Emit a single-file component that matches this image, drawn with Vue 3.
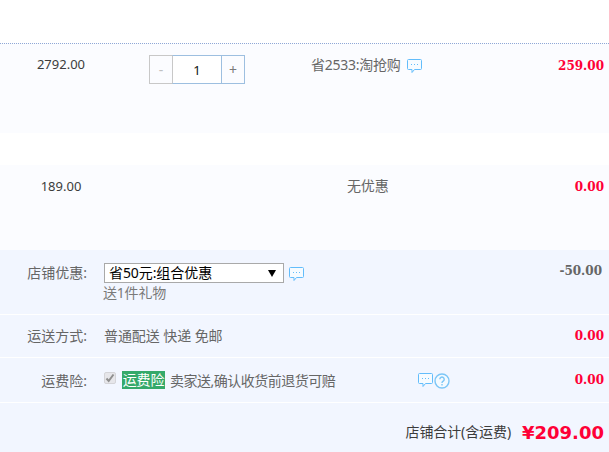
<script setup>
const lead = { price: '2792.00', qty: 1, promo: '省2533:淘抢购', total: '259.00' }
const bubble = 'M1.5.5h12a1 1 0 0 1 1 1v8a1 1 0 0 1-1 1H7.5l-2.5 3v-3H1.5a1 1 0 0 1-1-1v-8a1 1 0 0 1 1-1z'
</script>

<template>
  <div class="page">
    <div class="item first">
      <div class="price">{{ lead.price }}</div>
      <div class="qty">
        <span class="step minus">-</span>
        <span class="num">{{ lead.qty }}</span>
        <span class="step plus">+</span>
      </div>
      <div class="promo">
        <span>{{ lead.promo }}</span>
        <svg class="bubble" width="15" height="14" viewBox="0 0 15 14">
          <path :d="bubble" class="bubble-shape" />
          <path d="M4 5.5h1M7 5.5h1M10 5.5h1" class="bubble-dots" />
        </svg>
      </div>
      <div class="amount">{{ lead.total }}</div>
    </div>
    <div class="item second">
      <div class="price">189.00</div>
      <div class="qty"></div>
      <div class="promo none">无优惠</div>
      <div class="amount">0.00</div>
    </div>
    <div class="shop">
      <div class="row coupon">
        <div class="label">店铺优惠:</div>
        <div class="body">
          <div class="pick">
            <div class="select">
              <span>省50元:组合优惠</span>
              <span class="caret"></span>
            </div>
            <svg class="bubble" width="15" height="14" viewBox="0 0 15 14">
              <path :d="bubble" class="bubble-shape" />
              <path d="M4 5.5h1M7 5.5h1M10 5.5h1" class="bubble-dots" />
            </svg>
          </div>
          <div class="gift">送1件礼物</div>
        </div>
        <div class="amount off">-50.00</div>
      </div>
      <div class="row ship">
        <div class="label">运送方式:</div>
        <div class="body">普通配送 快递 免邮</div>
        <div class="amount ship-amount">0.00</div>
      </div>
      <div class="row insure">
        <div class="label">运费险:</div>
        <div class="body line">
          <span class="check">
            <svg width="10" height="10" viewBox="0 0 10 10"><path d="M1.5 5.5l2.2 2.5L8.5 1.5" fill="none" stroke="#8f8f8f" stroke-width="2" /></svg>
          </span>
          <span class="tag">运费险</span>
          <span class="note">卖家送,确认收货前退货可赔</span>
          <span class="icons">
            <svg width="15" height="14" viewBox="0 0 15 14">
              <path :d="bubble" class="bubble-shape" />
              <path d="M4 5.5h1M7 5.5h1M10 5.5h1" class="bubble-dots" />
            </svg>
            <svg class="help" width="16" height="16" viewBox="0 0 16 16">
              <circle cx="8" cy="8" r="7" fill="#f4faff" stroke="#7cc6f7" stroke-width="1.4" />
              <path d="M5.8 6.2a2.2 2.2 0 1 1 3.4 1.9c-.8.5-1.2.9-1.2 1.9" fill="none" stroke="#7cc6f7" stroke-width="1.4" />
              <path d="M8 11v1.6" stroke="#7cc6f7" stroke-width="1.4" />
            </svg>
          </span>
        </div>
        <div class="amount insure-amount">0.00</div>
      </div>
      <div class="sum">
        <span class="sum-label">店铺合计(含运费)</span>
        <span class="sum-value">¥209.00</span>
      </div>
    </div>
  </div>
</template>

<style>
html, body { margin: 0; background: #fff; }
</style>

<style scoped>
.page {
  width: 609px;
  height: 452px;
  overflow: hidden;
  padding-top: 43px;
  box-sizing: border-box;
  background: #fff;
  font: 14px/20px "Noto Sans", "Noto Sans CJK SC", sans-serif;
  color: #666;
}
.item {
  display: flex;
  background: #fbfcff;
  box-sizing: border-box;
}
.first {
  height: 90px;
  border-top: 1px dotted #8fa8d6;
  padding-top: 11px;
}
.second {
  height: 85px;
  margin-top: 32px;
  padding-top: 11px;
}
.price {
  width: 122px;
  text-align: center;
  font-size: 13px;
  line-height: 19px;
  color: #3c3c3c;
}
.second .price {
  line-height: 20px;
}
.qty {
  width: 96px;
  margin-left: 27px;
  height: 29px;
  display: flex;
  color: #3c3c3c;
}
.step {
  width: 24px;
  height: 29px;
  box-sizing: border-box;
  border: 1px solid #9dbfe0;
  text-align: center;
  line-height: 27px;
  font-size: 14px;
}
.minus {
  border-color: #c8c8c8;
  color: #c0c0c0;
}
.plus {
  border-left: 0;
  width: 23px;
  color: #7a7a7a;
}
.num {
  width: 50px;
  height: 29px;
  box-sizing: border-box;
  border: 1px solid #9dbfe0;
  border-left: 1px solid #c8c8c8;
  background: #fff;
  text-align: center;
  line-height: 29px;
  font-size: 13px;
  color: #111;
  margin-left: -1px;
}
.promo {
  width: 239px;
  padding-left: 66px;
  box-sizing: border-box;
  display: flex;
  align-items: flex-start;
  gap: 6px;
  letter-spacing: -0.25px;
}
.none {
  padding-left: 102px;
  letter-spacing: -0.15px;
}
.bubble {
  margin-top: 4px;
}
.bubble-shape {
  fill: #f6fbff;
  stroke: #63bdfb;
}
.bubble-dots {
  stroke: #63bdfb;
  fill: none;
}
.amount {
  flex: 1;
  text-align: right;
  padding-right: 5px;
  margin-top: 1px;
  font: bold 12px/20px "DejaVu Serif", serif;
  color: #ff0036;
}
.shop {
  background: #f2f6ff;
  height: 203px;
}
.row {
  display: flex;
  box-sizing: border-box;
  border-bottom: 1px solid #fff;
}
.coupon {
  height: 65px;
  padding-top: 13px;
}
.ship {
  height: 43px;
  padding-top: 11px;
}
.insure {
  height: 45px;
  padding-top: 13px;
}
.label {
  width: 87px;
  text-align: right;
  color: #666;
}
.body {
  width: 423px;
  padding-left: 17px;
  box-sizing: border-box;
  color: #666;
  letter-spacing: -0.08px;
}
.pick {
  display: flex;
  align-items: flex-start;
  gap: 5px;
}
.select {
  width: 180px;
  height: 20px;
  box-sizing: border-box;
  border: 1px solid #a9a9a9;
  background: #fff;
  color: #000;
  display: flex;
  align-items: center;
  justify-content: space-between;
  padding: 0 7px 0 4px;
  line-height: 18px;
}
.caret {
  width: 0;
  height: 0;
  border: 4px solid transparent;
  border-top: 7px solid #000;
  border-bottom: 0;
}
.gift {
  margin-top: 0;
  margin-left: -1px;
  line-height: 19px;
  letter-spacing: -0.2px;
  color: #7a7a7a;
}
.off {
  color: #666;
  padding-right: 7px;
  margin-top: -2px;
}
.ship-amount {
  margin-top: 0;
}
.insure-amount {
  margin-top: -1px;
}
.line {
  display: flex;
  align-items: flex-start;
}
.check {
  width: 12px;
  height: 12px;
  margin-top: 1px;
  box-sizing: border-box;
  border: 1px solid #d4d4d8;
  border-radius: 2px;
  background: #e6e6ea;
  display: flex;
  align-items: center;
  justify-content: center;
}
.tag {
  margin-left: 6px;
  background: #35a96a;
  color: #fff;
  padding: 0;
  width: 43px;
  white-space: nowrap;
  height: 18px;
  line-height: 18px;
  letter-spacing: -0.1px;
  text-align: center;
}
.note {
  margin-left: 5px;
  letter-spacing: -0.5px;
}
.icons {
  margin-left: 83px;
  display: flex;
  margin-top: 2px;
}
.help {
  margin-left: 1px;
}
.sum {
  display: flex;
  justify-content: flex-end;
  align-items: center;
  padding: 19px 5px 0 0;
  height: 20px;
}
.sum-label {
  font-size: 14px;
  letter-spacing: -0.1px;
  color: #3c3c3c;
}
.sum-value {
  margin-left: 11px;
  padding-top: 1px;
  font: bold 18px/20px "DejaVu Sans", sans-serif;
  color: #ff0036;
}
</style>
